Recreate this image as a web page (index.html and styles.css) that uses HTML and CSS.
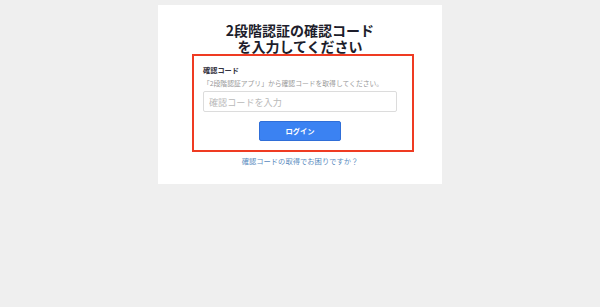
FILE: index.html
```html
<!DOCTYPE html>
<html lang="ja">
<head>
<meta charset="utf-8">
<link rel="stylesheet" href="styles.css">
</head>
<body>
<main class="card">
  <h1 class="title"><span class="line">2段階認証の確認コード</span><span class="line">を入力してください</span></h1>
  <section class="box">
    <div class="form">
      <div class="label">確認コード</div>
      <div class="desc">「2段階認証アプリ」から確認コードを取得してください。</div>
      <input class="input" type="text" placeholder="確認コードを入力">
      <button class="btn" type="button">ログイン</button>
    </div>
  </section>
  <a class="help" href="#">確認コードの取得でお困りですか？</a>
</main>
</body>
</html>
```

FILE: styles.css
```css
html, body {
  margin: 0;
  padding: 0;
  background: #efefef;
  font-family: "Noto Sans CJK JP", "Noto Sans", sans-serif;
}

.card {
  box-sizing: border-box;
  width: 284px;
  height: 179px;
  margin: 5px auto 0;
  padding-top: 18px;
  background: #ffffff;
  display: flex;
  flex-direction: column;
}

.title {
  margin: 0;
  font-size: 14px;
  line-height: 15.5px;
  font-weight: 700;
  text-align: center;
  color: #1d1d2b;
  display: flex;
  flex-direction: column;
  align-items: center;
}

.line {
  display: block;
  height: 15.5px;
}

.box {
  box-sizing: border-box;
  width: 222px;
  height: 98px;
  margin-left: 34px;
  border: 2px solid #ef3b22;
  padding: 9px 0 0 9px;
}

.form {
  width: 194px;
  display: flex;
  flex-direction: column;
}

.label {
  font-size: 7.2px;
  line-height: 10px;
  font-weight: 700;
  color: #333340;
}

.desc {
  margin-top: 3px;
  font-size: 6.8px;
  line-height: 10px;
  color: #9a9a9a;
  white-space: nowrap;
}

.input {
  box-sizing: border-box;
  margin: 3px 0 0;
  width: 194px;
  height: 21px;
  border: 1px solid #dcdcdc;
  border-radius: 2px;
  padding: 0 0 0 5px;
  font-family: inherit;
  font-size: 9.1px;
  color: #333;
  background: #fff;
  outline: none;
}

.input::placeholder {
  color: #b9b9b9;
}

.btn {
  box-sizing: border-box;
  align-self: center;
  margin-top: 9px;
  width: 82px;
  height: 20px;
  border: 1px solid #2f6ed8;
  border-radius: 2px;
  background: #3b82f2;
  color: #ffffff;
  font-family: inherit;
  font-size: 7.3px;
  font-weight: 700;
  padding: 0;
}

.help {
  margin-top: 4px;
  font-size: 7.3px;
  line-height: 10px;
  text-align: center;
  color: #5a8cc0;
  text-decoration: none;
}
```
